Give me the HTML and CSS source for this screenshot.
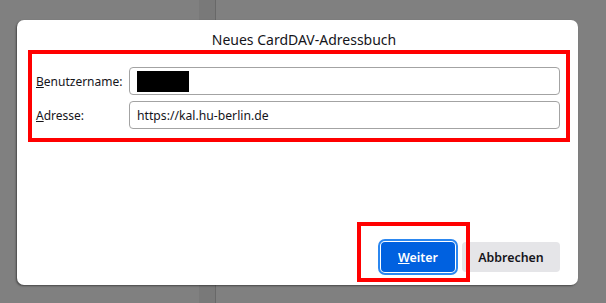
FILE: index.html
```html
<!DOCTYPE html>
<html lang="de">
<head>
  <meta charset="UTF-8">
  <meta name="viewport" content="width=device-width, initial-scale=1.0">
  <title>Neues CardDAV-Adressbuch</title>
  <link rel="stylesheet" href="styles.css">
</head>
<body>
  <!-- Dialog window -->
  <div class="dialog">
    <div class="title">Neues CardDAV-Adressbuch</div>

    <!-- Highlighted form area -->
    <div class="form mark">
      <label class="label"><u>B</u>enutzername:</label>
      <div class="field"><span class="redacted"></span></div>

      <label class="label"><u>A</u>dresse:</label>
      <div class="field">https://kal.hu-berlin.de</div>
    </div>

    <!-- Buttons -->
    <div class="buttons">
      <button class="btn primary"><u>W</u>eiter</button>
      <button class="btn cancel">Abbrechen</button>
    </div>
  </div>
</body>
</html>
```

FILE: styles.css
```css
/* Page background with the window edge behind the dialog */
body, html {
  margin: 0;
  padding: 0;
  height: 100%;
  overflow: hidden;
  font-family: "Noto Sans", "Open Sans", sans-serif;
  color: #15141a;
  background: linear-gradient(to right,
    #808080 0 199px,
    #797979 199px 215px,
    #686868 215px 216px,
    #808080 216px);
}

body {
  padding-top: 20px;
  box-sizing: border-box;
}

/* Dialog box */
.dialog {
  margin-left: 17px;
  width: 561px;
  height: 265px;
  box-sizing: border-box;
  padding: 10px 8px 0 11px;
  background-color: #fff;
  border-radius: 7px;
  box-shadow: -1px 1px 2px rgba(0, 0, 0, 0.45);
  display: flex;
  flex-direction: column;
}

.title {
  font-size: 14px;
  line-height: 20px;
  text-align: center;
  padding-left: 10px;
}

/* Red annotation frame */
.mark {
  border: 4px solid #ff0000;
}

/* Form grid */
.form {
  display: grid;
  grid-template-columns: 93px 1fr;
  row-gap: 6px;
  padding: 13px 6px 9px 4px;
  align-items: center;
}

.label {
  font-size: 12px;
}

.field {
  height: 28px;
  box-sizing: border-box;
  border: 1px solid #a3a3a3;
  border-radius: 4px;
  padding: 0 7px;
  font-size: 12.2px;
  display: flex;
  align-items: center;
}

.redacted {
  display: block;
  width: 52px;
  height: 21px;
  background-color: #000;
}

/* Button row */
.buttons {
  margin-top: auto;
  display: flex;
  justify-content: flex-end;
  gap: 7px;
  padding: 0 10px 13px 0;
}

.btn {
  font-family: inherit;
  font-size: 12.4px;
  font-weight: 600;
  color: #15141a;
  height: 30px;
  padding: 0;
  border: none;
  border-radius: 4px;
  background-color: #e5e5e8;
}

.btn.cancel {
  width: 98px;
}

.btn.primary {
  position: relative;
  width: 74px;
  color: #fff;
  background-color: #0061e0;
  outline: 2px solid #2b87f0;
  outline-offset: 1px;
}

/* Red annotation around the focused button */
.btn.primary::after {
  content: "";
  position: absolute;
  left: -24px;
  top: -20px;
  width: 105px;
  height: 52px;
  border: 4px solid #ff0000;
}
```
